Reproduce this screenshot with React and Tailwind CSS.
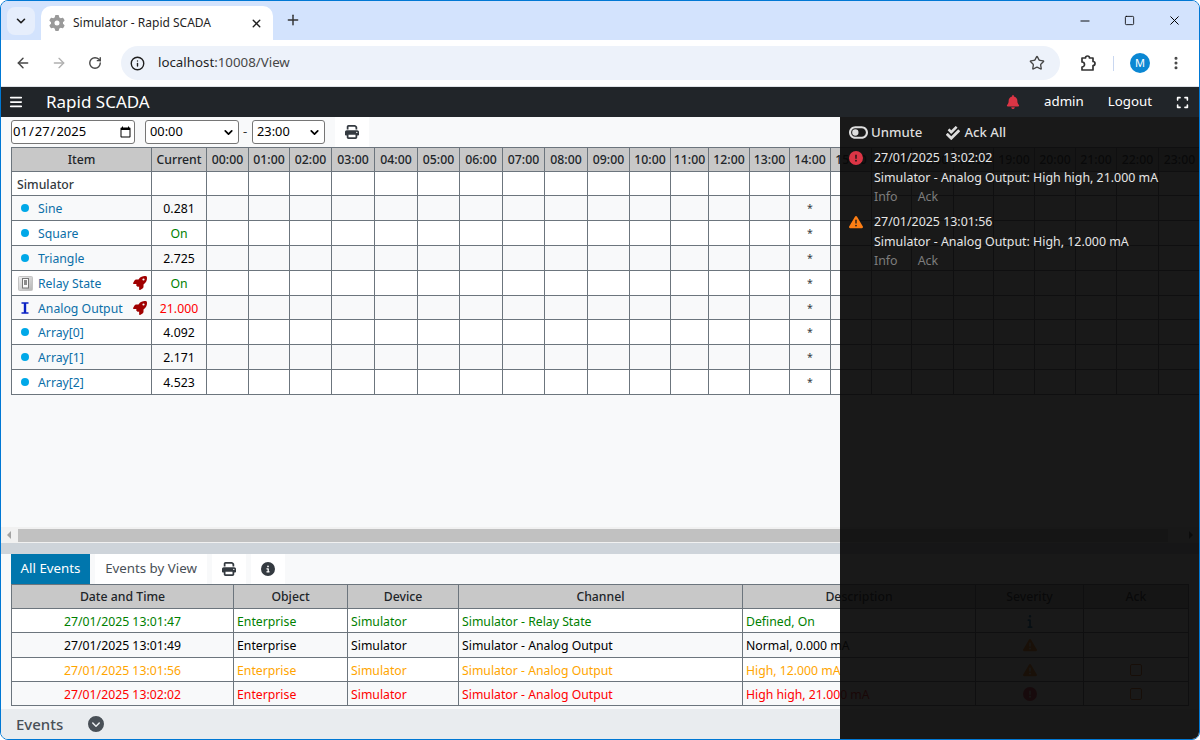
import {
  FaBars, FaBell, FaExpand, FaPrint, FaCircleInfo, FaInfo, FaCircleChevronDown, FaRocket, FaGear,
  FaToggleOff, FaCircleExclamation, FaTriangleExclamation,
} from 'react-icons/fa6';
import { FaCheckDouble } from 'react-icons/fa';
import { Info, ArrowLeft, ArrowRight, RotateCw, Star, EllipsisVertical, ChevronDown, X, Plus, Minus, Square } from 'lucide-react';

const hourCols = [
  'w-[42px]', 'w-[41px]', 'w-[42px]', 'w-[43px]', 'w-[43px]', 'w-[42px]', 'w-[43px]', 'w-[42px]',
  'w-[43px]', 'w-[42px]', 'w-[41px]', 'w-[38px]', 'w-[41px]', 'w-[40px]', 'w-[41px]', 'w-[41px]',
  'w-[40px]', 'w-[42px]', 'w-[40px]', 'w-[41px]', 'w-[41px]', 'w-[41px]', 'w-[42px]', 'w-[42px]',
];

const hours = hourCols.map((_, i) => `${String(i).padStart(2, '0')}:00`);

const items = [
  { name: 'Sine', value: '0.281', icon: 'dot', color: 'text-black', height: 'h-[25px]' },
  { name: 'Square', value: 'On', icon: 'dot', color: 'text-[#008000]', height: 'h-[25px]' },
  { name: 'Triangle', value: '2.725', icon: 'dot', color: 'text-black', height: 'h-[25px]' },
  { name: 'Relay State', value: 'On', icon: 'relay', rocket: true, color: 'text-[#008000]', height: 'h-[25px]' },
  { name: 'Analog Output', value: '21.000', icon: 'analog', rocket: true, color: 'text-[#ff0000]', height: 'h-[24px]', low: true },
  { name: 'Array[0]', value: '4.092', icon: 'dot', color: 'text-black', height: 'h-[25px]' },
  { name: 'Array[1]', value: '2.171', icon: 'dot', color: 'text-black', height: 'h-[25px]' },
  { name: 'Array[2]', value: '4.523', icon: 'dot', color: 'text-black', height: 'h-[25px]' },
];

const events = [
  { time: '27/01/2025 13:01:47', channel: 'Simulator - Relay State', desc: 'Defined, On', color: 'text-[#008000]', severity: 'info', height: 'h-[24px]', ack: false },
  { time: '27/01/2025 13:01:49', channel: 'Simulator - Analog Output', desc: 'Normal, 0.000 mA', color: 'text-black', severity: 'warn', height: 'h-[25px]', ack: false },
  { time: '27/01/2025 13:01:56', channel: 'Simulator - Analog Output', desc: 'High, 12.000 mA', color: 'text-[#ffa500]', severity: 'warn', height: 'h-[24px]', ack: true },
  { time: '27/01/2025 13:02:02', channel: 'Simulator - Analog Output', desc: 'High high, 21.000 mA', color: 'text-[#ff0000]', severity: 'crit', height: 'h-[24px]', ack: true },
];

const notifications = [
  { time: '27/01/2025 13:02:02', text: 'Simulator - Analog Output: High high, 21.000 mA', crit: true },
  { time: '27/01/2025 13:01:56', text: 'Simulator - Analog Output: High, 12.000 mA', crit: false },
];

const RelayIcon = () => (
  <svg width="15" height="15" viewBox="0 0 15 15" className="shrink-0">
    <defs>
      <linearGradient id="relayBg" x1="0" y1="0" x2="1" y2="1">
        <stop offset="0" stopColor="#f2f2f2" />
        <stop offset="1" stopColor="#b4b4b4" />
      </linearGradient>
    </defs>
    <rect x="0.5" y="0.5" width="14" height="14" rx="1" fill="url(#relayBg)" stroke="#c4c4c4" />
    <rect x="4.5" y="2.5" width="6" height="9.5" fill="#fafafa" stroke="#777777" />
    <rect x="6" y="4" width="3" height="5" fill="#8c8c8c" />
  </svg>
);

const ItemIcon = ({ type }) => {
  if (type === 'relay') {
    return (
      <span className="flex w-4 shrink-0 justify-center">
        <RelayIcon />
      </span>
    );
  }
  if (type === 'analog') {
    return (
      <span className="flex w-4 shrink-0 justify-center">
        <svg width="8" height="12" viewBox="0 0 8 12">
          <path d="M0.5 1h7M0.5 11h7" stroke="#0a22c4" strokeWidth="1.4" fill="none" />
          <path d="M4 1v10" stroke="#0a22c4" strokeWidth="2.4" fill="none" />
        </svg>
      </span>
    );
  }
  return (
    <span className="flex w-4 shrink-0 justify-center">
      <span className="size-2 rounded-full bg-[#00a8e8]" />
    </span>
  );
};

const BrowserChrome = () => (
  <>
    <div className="flex h-[39px] shrink-0 items-end bg-[#d3e3fd] text-[#1f1f1f]">
      <div className="mb-[5px] ml-[6px] flex size-[28px] items-center justify-center rounded-lg bg-[#e6eefc]">
        <ChevronDown size={14} strokeWidth={2.8} />
      </div>
      <div className="ml-[6px] flex h-[34px] w-[232px] items-center rounded-t-[10px] bg-white pl-[8px] pr-[10px]">
        <FaGear size={16} className="text-[#9a9a9a]" />
        <span className="ml-[8px] flex-1 text-[12px]">Simulator - Rapid SCADA</span>
        <X size={13} strokeWidth={2.6} />
      </div>
      <Plus size={16} strokeWidth={2.2} className="mb-[12px] ml-[12px] text-[#333333]" />
      <div className="mb-[12px] ml-auto flex items-center gap-[32px] pr-[17px] text-black">
        <Minus size={14} strokeWidth={1.6} />
        <Square size={11} strokeWidth={1.8} className="rounded-[2px]" />
        <X size={15} strokeWidth={1.6} />
      </div>
    </div>
    <div className="flex h-[46px] shrink-0 items-center bg-white text-[#474747]">
      <ArrowLeft size={16} strokeWidth={2.2} className="ml-[14px]" />
      <ArrowRight size={16} strokeWidth={2} className="ml-[20px] text-[#b0b0b0]" />
      <RotateCw size={14} strokeWidth={2.4} className="ml-[21px]" />
      <div className="ml-[19px] flex h-[34px] w-[939px] items-center rounded-full bg-[#edf2fa] pl-[9px] pr-[15px]">
        <Info size={15} strokeWidth={2.2} className="text-[#1f1f1f]" />
        <span className="ml-[13px] flex-1 text-[13.3px] text-[#1f1f1f]">
          localhost<span className="text-[#474747]">:10008/View</span>
        </span>
        <Star size={16} strokeWidth={2} />
      </div>
      <svg width="18" height="18" viewBox="0 0 18 18" className="ml-[19px]">
        <path
          d="M3 4h3.5a2 2 0 0 1 4 0H14v3.5a2 2 0 0 1 0 4V16H3v-3a2.3 2.3 0 0 0 0-5z"
          fill="none"
          stroke="#333333"
          strokeWidth="1.7"
          strokeLinejoin="round"
        />
      </svg>
      <span className="ml-[16px] h-[15px] w-px bg-[#c9d7f0]" />
      <span className="ml-[16px] flex size-[20px] items-center justify-center rounded-full bg-[#0b87d3] text-[11px] text-white">M</span>
      <EllipsisVertical size={16} strokeWidth={2.6} className="ml-[18px]" />
    </div>
    <div className="h-px shrink-0 bg-[#dfe3e8]" />
  </>
);

const Navbar = () => (
  <div className="flex h-[30px] shrink-0 items-center bg-[#212529] text-white">
    <FaBars size={14} className="ml-[8px]" />
    <span className="ml-[23px] -translate-y-px text-[17px] leading-none">Rapid SCADA</span>
    <FaBell size={14} className="ml-auto text-[#dc3545]" />
    <span className="ml-[24px] text-[13.3px]">admin</span>
    <span className="ml-[24px] text-[13.3px]">Logout</span>
    <FaExpand size={13} className="ml-[24px] mr-[10px]" />
  </div>
);

const TimeSelect = ({ value, width }) => (
  <div className={`relative ${width}`}>
    <select
      defaultValue={value}
      className="h-[24px] w-full appearance-none rounded-[3px] border border-[#767676] bg-white pl-[4px] text-[12.8px]"
    >
      <option>{value}</option>
    </select>
    <ChevronDown size={13} strokeWidth={3.2} className="pointer-events-none absolute right-[4px] top-[6px] text-black" />
  </div>
);

const Toolbar = () => (
  <div className="flex h-[30px] shrink-0 items-center pl-[10px] text-[13px] text-black">
    <input
      type="date"
      defaultValue="2025-01-27"
      className="h-[24px] w-[124px] rounded-[3px] border border-[#767676] bg-white text-[13px]"
    />
    <div className="ml-[10px]">
      <TimeSelect value="00:00" width="w-[94px]" />
    </div>
    <span className="mx-[4px] w-[5px] text-[#333333]">-</span>
    <TimeSelect value="23:00" width="w-[73px]" />
    <div className="ml-[10px] flex h-[30px] w-[34px] items-center justify-center bg-white">
      <FaPrint size={14} className="text-[#343a40]" />
    </div>
  </div>
);

const cell = 'border border-[#6c757d] p-0';

const DataTable = () => (
  <div className="min-h-0 flex-1 overflow-hidden pl-[10px]">
    <table className="w-[1189px] table-fixed border-collapse text-[12.25px]">
      <colgroup>
        <col className="w-[140px]" />
        <col className="w-[55px]" />
        {hourCols.map((w, i) => (
          <col key={i} className={w} />
        ))}
      </colgroup>
      <thead>
        <tr className="h-[24px] bg-[#c8c8c8] text-[#212529]">
          <th className={`${cell} pt-[2px] font-medium`}>Item</th>
          <th className={`${cell} pt-[2px] font-medium`}>Current</th>
          {hours.map((h) => (
            <th key={h} className={`${cell} pt-[2px] font-medium`}>{h}</th>
          ))}
        </tr>
      </thead>
      <tbody>
        <tr className="h-[24px] bg-white">
          <td className={`${cell} pl-[5px] pt-[3px] font-medium text-[#343a40]`}>Simulator</td>
          <td className={cell} />
          {hours.map((h) => (
            <td key={h} className={cell} />
          ))}
        </tr>
        {items.map((item, idx) => (
          <tr key={item.name} className={`${item.height} ${idx % 2 === 0 ? 'bg-[#f8f9fa]' : 'bg-white'}`}>
            <td className={cell}>
              <div className="flex items-center pl-[5px] pr-[4px]">
                <ItemIcon type={item.icon} />
                <span className={`ml-[5px] flex-1 text-[#0b6ea8] ${item.low ? 'translate-y-[2px]' : 'translate-y-px'}`}>{item.name}</span>
                {item.rocket && <FaRocket size={14} className="text-[#a00000]" />}
              </div>
            </td>
            <td className={`${cell} text-center ${item.low ? 'pt-[4px]' : 'pt-[2px]'} ${item.color}`}>{item.value}</td>
            {hours.map((h) => (
              <td key={h} className={`${cell} pt-[2px] text-center text-[10.5px] text-[#343a40]`}>{h === '14:00' ? '*' : ''}</td>
            ))}
          </tr>
        ))}
      </tbody>
    </table>
  </div>
);

const Scrollbar = () => (
  <div className="flex h-[16px] shrink-0 items-center bg-[#f1f1f1]">
    <span className="ml-[6px] h-0 w-0 border-y-[4px] border-r-[4px] border-y-transparent border-r-[#a3a3a3]" />
    <div className="ml-[7px] h-[13px] w-[1150px] bg-[#c1c1c1]" />
    <span className="ml-auto mr-[6px] h-0 w-0 border-y-[4px] border-l-[4px] border-y-transparent border-l-[#505050]" />
  </div>
);

const SeverityIcon = ({ level }) => {
  if (level === 'info') return <FaInfo size={14} className="mx-auto text-[#0b6ea8]" />;
  if (level === 'warn') return <FaTriangleExclamation size={14} className="mx-auto text-[#fd7e14]" />;
  return <FaCircleExclamation size={14} className="mx-auto text-[#dc3545]" />;
};

const EventsPanel = () => (
  <div className="shrink-0">
    <div className="flex h-[30px] pl-[10px] text-[13.3px]">
      <div className="flex w-[79px] items-center justify-center bg-[#0076ad] text-white">All Events</div>
      <div className="ml-[5px] flex w-[112px] items-center justify-center bg-white text-[#495057]">Events by View</div>
      <div className="ml-[5px] flex w-[34px] items-center justify-center bg-white">
        <FaPrint size={14} className="text-[#343a40]" />
      </div>
      <div className="ml-[5px] flex w-[34px] items-center justify-center bg-white">
        <FaCircleInfo size={14} className="text-[#343a40]" />
      </div>
    </div>
    <div className="pl-[10px]">
      <table className="w-[1177px] table-fixed border-collapse text-[12.25px]">
        <colgroup>
          <col className="w-[222px]" />
          <col className="w-[114px]" />
          <col className="w-[111px]" />
          <col className="w-[284px]" />
          <col className="w-[233px]" />
          <col className="w-[108px]" />
          <col className="w-[105px]" />
        </colgroup>
        <thead>
          <tr className="h-[24px] bg-[#c8c8c8] text-[#212529]">
            {['Date and Time', 'Object', 'Device', 'Channel', 'Description', 'Severity', 'Ack'].map((h) => (
              <th key={h} className={`${cell} pt-[2px] font-medium`}>{h}</th>
            ))}
          </tr>
        </thead>
        <tbody>
          {events.map((ev, idx) => (
            <tr key={ev.time} className={`${ev.height} ${ev.color} ${idx % 2 === 0 ? 'bg-white' : 'bg-[#f8f9fa]'}`}>
              <td className={`${cell} pt-[3px] text-center`}>{ev.time}</td>
              <td className={`${cell} pl-[3px] pt-[3px]`}>Enterprise</td>
              <td className={`${cell} pl-[3px] pt-[3px]`}>Simulator</td>
              <td className={`${cell} pl-[3px] pt-[3px]`}>{ev.channel}</td>
              <td className={`${cell} pl-[3px] pt-[3px]`}>{ev.desc}</td>
              <td className={cell}><SeverityIcon level={ev.severity} /></td>
              <td className={cell}>
                {ev.ack && <div className="mx-auto size-[12px] rounded-[2px] border border-[#dc6a14]" />}
              </td>
            </tr>
          ))}
        </tbody>
      </table>
    </div>
  </div>
);

const NotificationPanel = () => (
  <div className="absolute bottom-0 left-[839px] right-0 top-[116px] bg-[#080808]/[.93] px-[9px] text-[12.4px] text-[#e6e6e6]">
    <div className="flex h-[30px] items-center pt-[1px] text-[#dedede]">
      <FaToggleOff size={19} />
      <span className="ml-[3px] text-[13.2px] font-medium">Unmute</span>
      <FaCheckDouble size={14} className="ml-[24px]" />
      <span className="ml-[4px] text-[13.2px] font-medium">Ack All</span>
    </div>
    {notifications.map((n) => (
      <div key={n.time} className="flex h-[64px] pt-[1px]">
        {n.crit ? (
          <FaCircleExclamation size={14} className="mt-[3px] text-[#dc3545]" />
        ) : (
          <FaTriangleExclamation size={14} className="mt-[3px] text-[#fd7e14]" />
        )}
        <div className="ml-[11px] leading-[19.5px]">
          <div>{n.time}</div>
          <div>{n.text}</div>
          <div className="text-[#7d7d7d]">
            Info<span className="ml-[20px]">Ack</span>
          </div>
        </div>
      </div>
    ))}
  </div>
);

export default function App() {
  return (
    <div className="relative flex h-[740px] w-[1200px] flex-col overflow-hidden rounded-[8px] border border-[#0078d4] bg-[#f8f9fa] font-['Noto_Sans','Open_Sans',sans-serif]">
      <BrowserChrome />
      <Navbar />
      <Toolbar />
      <DataTable />
      <Scrollbar />
      <div className="h-[11px] shrink-0 bg-[#ced4da]" />
      <EventsPanel />
      <div className="mt-[3px] flex h-[30px] shrink-0 items-center bg-[#e9ecef] pl-[15px]">
        <span className="text-[15px] font-medium text-[#495057]">Events</span>
        <FaCircleChevronDown size={16} className="ml-[25px] text-[#495057]" />
      </div>
      <NotificationPanel />
    </div>
  );
}
